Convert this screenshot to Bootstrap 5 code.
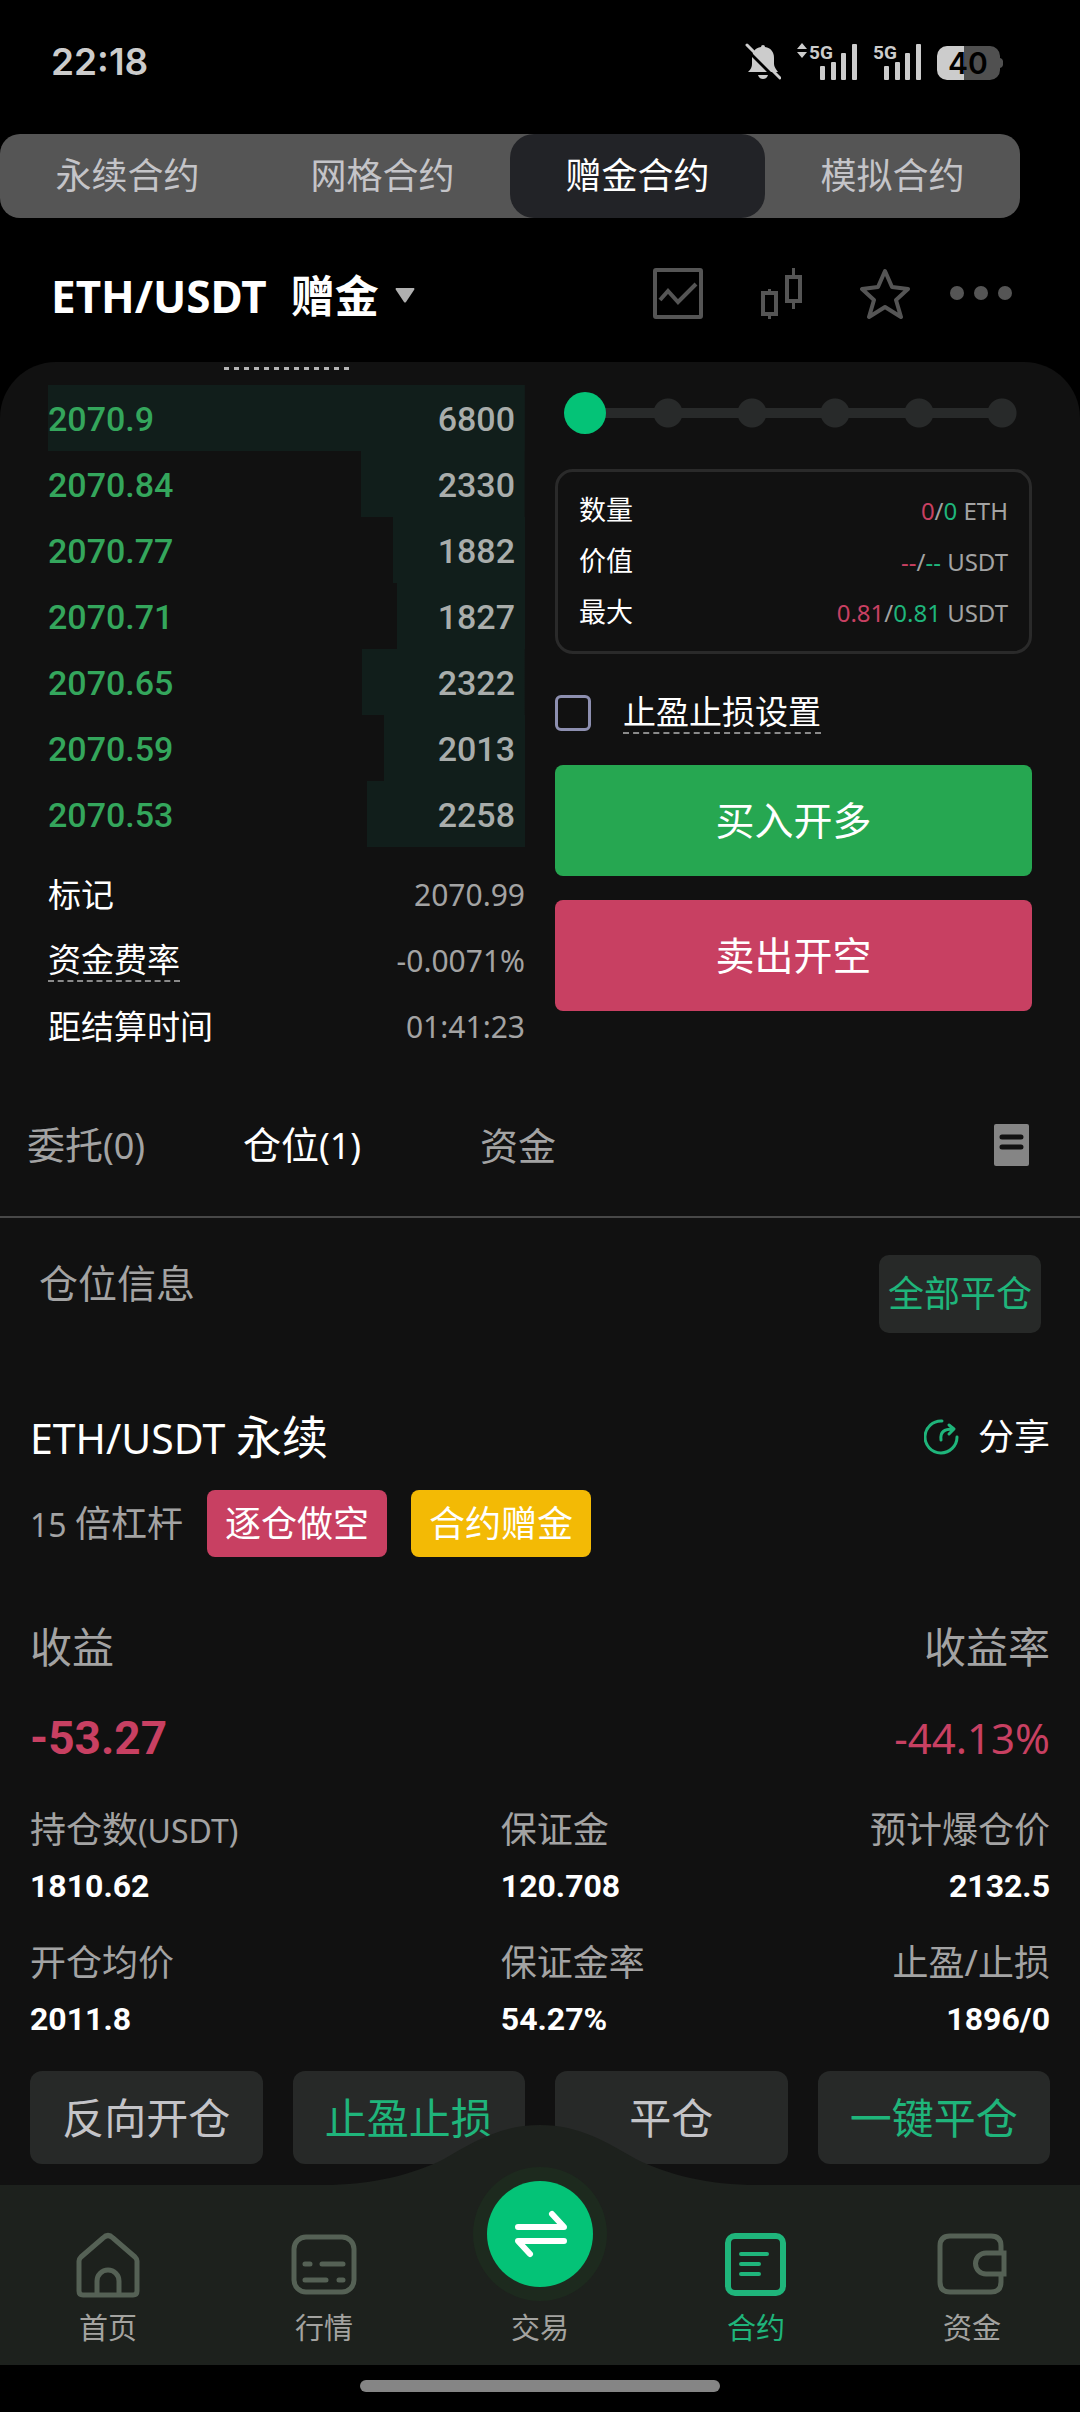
<!DOCTYPE html>
<html lang="zh-CN">
<head>
<meta charset="utf-8">
<meta name="viewport" content="width=device-width, initial-scale=1">
<title>ETH/USDT 赠金合约</title>
<link href="https://cdn.jsdelivr.net/npm/bootstrap@5.3.0/dist/css/bootstrap.min.css" rel="stylesheet">
<style>
  :root { --up:#26a751; --down:#c84062; --mint:#04c377; --mint-text:#1fb57b; --panel:#111111; --raised:#272928; --muted:#a3a3a3; }
  body { background:#000; color:#fff; font-family:"Noto Sans","Noto Sans CJK SC",sans-serif; }
  button { font-family:inherit; }
  a { text-decoration:none; color:inherit; }
  svg { display:block; flex:none; }
  .ink-muted { color:var(--muted); }
  .ink-down { color:var(--down); }
  .ink-mint { color:var(--mint-text); }
  .t24 { font-size:24px; } .t27 { font-size:27px; } .t30 { font-size:30px; } .t32 { font-size:32px; }
  .t33 { font-size:33px; } .t36 { font-size:36px; } .t39 { font-size:39px; } .t41 { font-size:41px; } .t42 { font-size:42px; } .t46 { font-size:46px; }
  .lh40 { line-height:40px; } .lh48 { line-height:48px; } .lh60 { line-height:60px; }
  .dashes { border-bottom:2px dashed #8a8a8a; }

  .statusbar { height:134px; padding:0 77px 10px 51px; color:#ccc; }
  .clock { font:600 37px/48px Inter,sans-serif; }
  .status-icons { gap:15px; }

  .segments { width:94.4444%; background:#555; border-radius:20px; }
  .segments button { flex:1; height:84px; border:0; border-radius:24px; background:none; color:#c4c4c8; font-size:36px; }
  .segments button.active { background:#222327; color:#fff; }

  .pairbar { height:144px; padding:8px 68px 0 51px; }
  .pairbar button { background:none; border:0; padding:0; color:#fff; }
  .pairbar .pair { padding-top:3px; font-size:44px; font-weight:700; line-height:60px; gap:24px; }
  .pair svg { margin-left:-8px; }
  .tool-candles { margin:0 58px; }
  .tool-more { margin-left:40px; }

  .sheet { background:var(--panel); border-radius:56px 56px 0 0; }
  .trade { padding:0 48px; gap:30px; }
  .trade > * { flex:1 1 0; min-width:0; }
  .clipped { width:125px; height:3px; margin:5px auto 15px 176px; background:repeating-linear-gradient(90deg,#b5b5b5 0 5px,transparent 5px 10px); }
  .book td { height:66px; padding:2px 0 0; font:500 34px/40px Roboto,sans-serif; }
  .book td:first-child { color:#34a65c; }
  .book td:last-child { color:#a9adab; text-align:right; padding-right:10px; }
  .book tr { background:linear-gradient(#111e1b,#111e1b) right/0 100% no-repeat; }
  .facts { padding-top:15px; }
  .facts > div { height:66px; }

  .ticket { padding-top:30px; }
  .leverage { -webkit-appearance:none; appearance:none; height:42px; margin:0 9px; --dot:radial-gradient(circle,#282a2a 14px,transparent 15px);
    background:linear-gradient(#282a2a,#282a2a) center/calc(100% - 42px) 10px no-repeat,
      var(--dot) 0 0/42px 42px no-repeat, var(--dot) 20% 0/42px 42px no-repeat, var(--dot) 40% 0/42px 42px no-repeat,
      var(--dot) 60% 0/42px 42px no-repeat, var(--dot) 80% 0/42px 42px no-repeat, var(--dot) 100% 0/42px 42px no-repeat; }
  .leverage::-webkit-slider-thumb { -webkit-appearance:none; width:42px; height:42px; border-radius:50%; background:var(--mint); }
  .limits { margin-top:35px; padding:13px 21px; border:3px solid #2a2a2a; border-radius:18px; }
  .limits > div { height:51px; }
  .stops { margin:38px 0 31px; gap:32px; }
  .stops input { appearance:none; width:36px; height:36px; margin:0; border:3px solid #8d8fb0; border-radius:6px; background:none; }
  .order { height:111px; border:0; border-radius:8px; color:#fff; font-size:39px; }
  .order + .order { margin-top:24px; }
  .bg-up { background:var(--up); } .bg-down { background:var(--down); }

  .tabs { padding:64px 51px 50px 0; border-bottom:2px solid #484848; }
  .tabs button { width:216px; height:42px; padding:0; border:0; background:none; color:var(--muted); font-size:38px; line-height:40px; }
  .tabs button:first-child { width:194px; padding-right:22px; }
  .tabs button.active { color:#fff; }
  .tabs .icon-btn { width:auto; margin-left:auto; }

  .poshead { padding:37px 39px 0 39px; line-height:56px; }
  .closeall { width:162px; height:78px; border:0; border-radius:10px; background:var(--raised); }
  .position { padding:73px 30px 21px; }
  .share { gap:19px; }
  .chips { margin-top:22px; height:67px; gap:24px; }
  .chip { padding:0 18px; border-radius:8px; line-height:67px; font-size:36px; }
  .bg-gold { background:#f3ba05; }
  .pnl { margin-top:60px; }
  .pnl-values { margin-top:31px; }
  .pnl-big { font:700 46px/60px Roboto,sans-serif; }
  .stats { display:grid; grid-template-columns:6fr 3fr 4fr; margin-top:38px; row-gap:28px; }
  .stats > div { height:105px; }
  .stats > div:nth-child(3n) { text-align:right; }
  .stats span { display:block; }
  .stats small { font-size:32px; line-height:40px; }
  .stats .figure { margin-top:8px; font:700 32px/48px Roboto,sans-serif; }
  .actions { margin-top:27px; gap:30px; }
  .actions button { flex:1; height:93px; padding:0; border:0; border-radius:12px; background:var(--raised); color:#c4c4c8; font-size:42px; }
  .actions button.ink-mint { color:var(--mint-text); }

  .dock { position:relative; background:#1d211d; padding:47px 0 17px; }
  .dock .hump { position:absolute; left:50%; bottom:100%; transform:translateX(-50%); }
  .dock a { position:relative; flex:1; gap:10px; color:#a3a3a0; font-size:29px; line-height:40px; }
  .dock a.active { color:var(--mint-text); }
  .dock .trade-btn { margin:-65px 0 -3px; }
  .homebar { height:48px; padding-top:15px; }
  .homebar div { width:33.3333%; height:12px; border-radius:6px; background:#858585; }
</style>
<script src="https://cdn.jsdelivr.net/npm/bootstrap@5.3.0/dist/js/bootstrap.bundle.min.js"></script>
</head>
<body class="d-flex flex-column min-vh-100">

<div class="statusbar d-flex align-items-center justify-content-between">
  <span class="clock">22:18</span>
  <div class="status-icons d-flex">
    <svg width="36" height="38" viewBox="0 0 36 38" fill="#ccc">
      <path d="M18 2a2 2 0 0 1 2 2c6 1 9 5 9 11v6c0 3 2 5 4 8H3c3-3 4-5 4-8v-6C7 9 10 5 16 4a2 2 0 0 1 2-2z"/>
      <path d="M13 32h10c-1 3-3 4-5 4s-4-1-5-4z"/>
      <path d="M0 5l34 34" stroke="#000" stroke-width="3"/>
      <path d="M2 2l33 33" stroke="#ccc" stroke-width="3" stroke-linecap="round"/>
    </svg>
    <svg width="62" height="38" viewBox="0 0 62 38" fill="#ccc" overflow="visible">
      <path d="M6 0l5 6H1zM6 15l5-6H1z"/>
      <text x="13" y="16" font-family="Roboto" font-weight="700" font-size="19">5G</text>
      <rect x="24" y="23" width="5" height="14" rx="1"/><rect x="35" y="19" width="5" height="18" rx="1"/><rect x="45" y="10" width="5" height="27" rx="1"/><rect x="56" y="1" width="5" height="36" rx="1"/>
    </svg>
    <svg width="49" height="38" viewBox="0 0 49 38" fill="#ccc" overflow="visible">
      <text x="0" y="16" font-family="Roboto" font-weight="700" font-size="19">5G</text>
      <rect x="11" y="23" width="5" height="14" rx="1"/><rect x="22" y="19" width="5" height="18" rx="1"/><rect x="32" y="10" width="5" height="27" rx="1"/><rect x="43" y="1" width="5" height="36" rx="1"/>
    </svg>
    <svg width="66" height="38" viewBox="0 0 66 38">
      <path d="M10 3h43a10 10 0 0 1 10 10v2a4 4 0 0 1 3 4v2a4 4 0 0 1-3 4v2a10 10 0 0 1-10 10H10z" fill="#505050"/>
      <path d="M27 3v34H10A10 10 0 0 1 0 27V13A10 10 0 0 1 10 3z" fill="#ccc"/>
      <text x="31" y="31" text-anchor="middle" font-family="Inter" font-weight="600" font-size="30">40</text>
    </svg>
  </div>
</div>

<nav class="segments d-flex">
  <button type="button">永续合约</button>
  <button type="button">网格合约</button>
  <button type="button" class="active">赠金合约</button>
  <button type="button">模拟合约</button>
</nav>

<header class="pairbar d-flex align-items-center justify-content-between">
  <button type="button" class="pair d-flex align-items-center">
    <span>ETH/USDT</span><span>赠金</span>
    <svg width="20" height="15" viewBox="0 0 20 15" fill="#b0b0b0"><path d="M1 0h18q1 1 0 2l-8 12q-1 1-2 0L1 2q-1-1 0-2z"/></svg>
  </button>
  <div class="d-flex align-items-center">
    <button type="button" aria-label="图表"><svg width="50" height="52" viewBox="0 0 50 52" fill="none" stroke="#555" stroke-width="4"><rect x="2" y="2" width="46" height="47" rx="1"/><path d="M7 32l8-9 10 11L43 16"/></svg></button>
    <button type="button" class="tool-candles" aria-label="K线"><svg width="41" height="52" viewBox="0 0 41 52" fill="none" stroke="#555" stroke-width="4"><rect x="2" y="25" width="13" height="21"/><path d="M8.500 21v3M8.500 47v4M32.500 0v7M32.500 34v7" stroke-width="3"/><rect x="26" y="9" width="13" height="24"/></svg></button>
    <button type="button" aria-label="收藏"><svg width="50" height="52" viewBox="0 0 50 52" fill="none" stroke="#555" stroke-width="4" stroke-linejoin="round"><path d="M25 3l7 16 16 2-12 11 5 17-16-10-16 10 5-17L2 21l16-2z"/></svg></button>
    <button type="button" class="tool-more" aria-label="更多"><svg width="62" height="52" viewBox="0 0 62 52" fill="#555"><circle cx="7" cy="25" r="7"/><circle cx="31" cy="25" r="7"/><circle cx="55" cy="25" r="7"/></svg></button>
  </div>
</header>

<main class="sheet flex-grow-1">
  <section class="trade d-flex">
    <div>
      <div class="clipped"></div>
      <table class="book w-100">
        <tr style="background-size:100% 100%"><td>2070.9</td><td>6800</td></tr>
        <tr style="background-size:34.3% 100%"><td>2070.84</td><td>2330</td></tr>
        <tr style="background-size:27.7% 100%"><td>2070.77</td><td>1882</td></tr>
        <tr style="background-size:26.9% 100%"><td>2070.71</td><td>1827</td></tr>
        <tr style="background-size:34.1% 100%"><td>2070.65</td><td>2322</td></tr>
        <tr style="background-size:29.6% 100%"><td>2070.59</td><td>2013</td></tr>
        <tr style="background-size:33.2% 100%"><td>2070.53</td><td>2258</td></tr>
      </table>
      <div class="facts lh40 t33">
        <div class="d-flex align-items-center justify-content-between"><span>标记</span><span class="t30 ink-muted">2070.99</span></div>
        <div class="d-flex align-items-center justify-content-between"><span class="dashes">资金费率</span><span class="t30 ink-muted">-0.0071%</span></div>
        <div class="d-flex align-items-center justify-content-between"><span>距结算时间</span><span class="t30 ink-muted">01:41:23</span></div>
      </div>
    </div>
    <form class="ticket d-flex flex-column">
      <input class="leverage" type="range" min="0" max="100" value="0" aria-label="比例">
      <div class="limits t27">
        <div class="d-flex align-items-center justify-content-between"><span>数量</span><span class="t24 ink-muted"><span class="ink-down">0</span>/<span class="ink-mint">0</span> ETH</span></div>
        <div class="d-flex align-items-center justify-content-between"><span>价值</span><span class="t24 ink-muted"><span class="ink-down">--</span>/<span class="ink-mint">--</span> USDT</span></div>
        <div class="d-flex align-items-center justify-content-between"><span>最大</span><span class="t24 ink-muted"><span class="ink-down">0.81</span>/<span class="ink-mint">0.81</span> USDT</span></div>
      </div>
      <div class="stops d-flex align-items-center">
        <input type="checkbox" id="stops"><label for="stops" class="t33 lh40 dashes">止盈止损设置</label>
      </div>
      <button type="button" class="order bg-up">买入开多</button>
      <button type="button" class="order bg-down">卖出开空</button>
    </form>
  </section>

  <nav class="tabs d-flex align-items-center">
    <button type="button">委托<span class="t36">(0)</span></button>
    <button type="button" class="active">仓位<span class="t36">(1)</span></button>
    <button type="button">资金</button>
    <button type="button" class="icon-btn" aria-label="全部委托"><svg width="35" height="42" viewBox="0 0 35 42"><rect width="35" height="42" rx="2" fill="#858585"/><path d="M8 13h19M8 23h19" stroke="#111" stroke-width="5" stroke-linecap="round"/></svg></button>
  </nav>

  <div class="poshead d-flex justify-content-between align-items-start">
    <span class="t39 ink-muted">仓位信息</span>
    <button type="button" class="closeall t36 ink-mint p-0">全部平仓</button>
  </div>

  <section class="position">
    <div class="d-flex align-items-center justify-content-between lh60">
      <span class="t46"><span class="t41">ETH/USDT </span>永续</span>
      <a href="#" class="share d-flex align-items-center t36">
        <svg width="35" height="36" viewBox="0 0 35 36" fill="none" stroke="#1fb57b" stroke-width="3" stroke-linecap="round" stroke-linejoin="round"><path d="M18 2A16 16 0 1 0 33 18"/><path d="M17 21c-1-8 3-11 12-11M25 6l5 4-5 5"/></svg>
        分享
      </a>
    </div>
    <div class="chips d-flex align-items-center">
      <span class="t36 ink-muted"><span class="t32">15 </span>倍杠杆</span>
      <span class="chip bg-down">逐仓做空</span>
      <span class="chip bg-gold">合约赠金</span>
    </div>
    <div class="pnl d-flex justify-content-between t42 lh60 ink-muted"><span>收益</span><span>收益率</span></div>
    <div class="pnl-values d-flex justify-content-between t42 lh60 ink-down"><span class="pnl-big">-53.27</span><span>-44.13%</span></div>
    <div class="stats">
      <div><span class="t36 lh48 ink-muted">持仓数<small>(USDT)</small></span><span class="figure">1810.62</span></div>
      <div><span class="t36 lh48 ink-muted">保证金</span><span class="figure">120.708</span></div>
      <div><span class="t36 lh48 ink-muted">预计爆仓价</span><span class="figure">2132.5</span></div>
      <div><span class="t36 lh48 ink-muted">开仓均价</span><span class="figure">2011.8</span></div>
      <div><span class="t36 lh48 ink-muted">保证金率</span><span class="figure">54.27%</span></div>
      <div><span class="t36 lh48 ink-muted">止盈/止损</span><span class="figure">1896/0</span></div>
    </div>
    <div class="actions d-flex">
      <button type="button">反向开仓</button>
      <button type="button" class="ink-mint">止盈止损</button>
      <button type="button">平仓</button>
      <button type="button" class="ink-mint">一键平仓</button>
    </div>
  </section>
</main>

<nav class="dock d-flex">
  <svg class="hump" width="436" height="60" viewBox="0 0 436 60" fill="#1d211d"><path d="M0 60C50 60 90 50 122 34C150 18 178 0 218 0S286 18 314 34C346 50 386 60 436 60z"/></svg>
  <a href="#" class="d-flex flex-column align-items-center">
    <svg width="66" height="66" viewBox="0 0 66 66" fill="none" stroke="#556155" stroke-width="5" stroke-linejoin="round"><path d="M4 29q0-2 2-4L28 6q5-5 10 0l22 19q2 2 2 4v30q0 4-4 4H8q-4 0-4-4z"/><path d="M22 62V49a11 11 0 0 1 22 0v13"/></svg>
    首页
  </a>
  <a href="#" class="d-flex flex-column align-items-center">
    <svg width="66" height="66" viewBox="0 0 66 66" fill="none" stroke="#556155" stroke-width="5" stroke-linecap="round"><rect x="3" y="5" width="60" height="55" rx="12"/><path d="M14 32h5M31 32h21M14 48h21M48 48h4"/></svg>
    行情
  </a>
  <a href="#" class="d-flex flex-column align-items-center">
    <svg class="trade-btn" width="134" height="134" viewBox="0 0 134 134"><circle cx="67" cy="67" r="67" fill="#1d2a1e"/><circle cx="67" cy="67" r="53" fill="#04c377"/><path d="M45 60h46L79 47M91 74H45l12 13" fill="none" stroke="#fff" stroke-width="6" stroke-linecap="round" stroke-linejoin="round"/></svg>
    交易
  </a>
  <a href="#" class="active d-flex flex-column align-items-center">
    <svg width="66" height="66" viewBox="0 0 66 66" fill="none" stroke="#1fb57b" stroke-width="6" stroke-linecap="round"><rect x="5" y="4" width="55" height="57" rx="7"/><path d="M18 22h26M18 32h18M18 42h18" stroke-width="4"/></svg>
    合约
  </a>
  <a href="#" class="d-flex flex-column align-items-center">
    <svg width="70" height="66" viewBox="0 0 70 66" fill="none" stroke="#556155" stroke-width="5"><path d="M64 21v-7q0-10-10-10H13Q3 4 3 14v36q0 10 10 10h41q10 0 10-10v-8"/><path d="M67 21H49a10 10 0 0 0 0 21h18z"/></svg>
    资金
  </a>
</nav>
<div class="homebar d-flex justify-content-center"><div></div></div>
</body>
</html>
